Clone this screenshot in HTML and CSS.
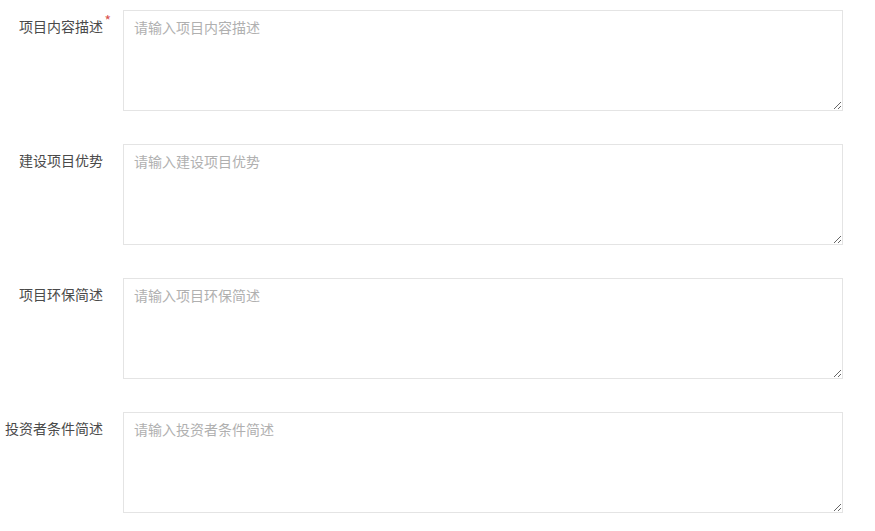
FILE: index.html
```html
<!DOCTYPE html>
<html lang="zh-CN">

<head>
    <meta charset="UTF-8">
    <meta name="viewport" content="width=device-width, initial-scale=1">
    <title>项目信息</title>
    <link rel="stylesheet" href="styles.css">
</head>

<body>

    <form class="project-form">
        <div class="form-row">
            <label class="form-label" for="desc"><span class="required">项目内容描述</span></label>
            <textarea id="desc" class="form-textarea" placeholder="请输入项目内容描述"></textarea>
        </div>
        <div class="form-row">
            <label class="form-label" for="advantage">建设项目优势</label>
            <textarea id="advantage" class="form-textarea" placeholder="请输入建设项目优势"></textarea>
        </div>
        <div class="form-row">
            <label class="form-label" for="env">项目环保简述</label>
            <textarea id="env" class="form-textarea" placeholder="请输入项目环保简述"></textarea>
        </div>
        <div class="form-row">
            <label class="form-label" for="investor">投资者条件简述</label>
            <textarea id="investor" class="form-textarea" placeholder="请输入投资者条件简述"></textarea>
        </div>
    </form>

</body>

</html>
```

FILE: styles.css
```css
body {
    margin: 0;
    background-color: #fff;
    font-family: "Noto Sans CJK SC", "Microsoft YaHei", sans-serif;
    font-size: 14px;
    color: #555;
}

.project-form {
    padding-top: 10px;
}

.form-row {
    display: flex;
    align-items: flex-start;
    margin-bottom: 33px;
}

.form-label {
    width: 103px;
    padding-right: 20px;
    padding-top: 6px;
    line-height: 20px;
    text-align: right;
    color: #4a4a4a;
    flex-shrink: 0;
}

.required {
    position: relative;
}

.required::after {
    content: "*";
    position: absolute;
    right: -8px;
    top: -6px;
    color: #d9534f;
    font-size: 14px;
}

.form-textarea {
    box-sizing: border-box;
    width: 720px;
    height: 101px;
    margin: 0;
    padding: 6px 10px;
    border: 1px solid #e4e4e4;
    border-radius: 0;
    font-family: inherit;
    font-size: 14px;
    line-height: 20px;
    color: #555;
    outline: none;
}

.form-textarea::placeholder {
    color: #b0b0b0;
}
```
